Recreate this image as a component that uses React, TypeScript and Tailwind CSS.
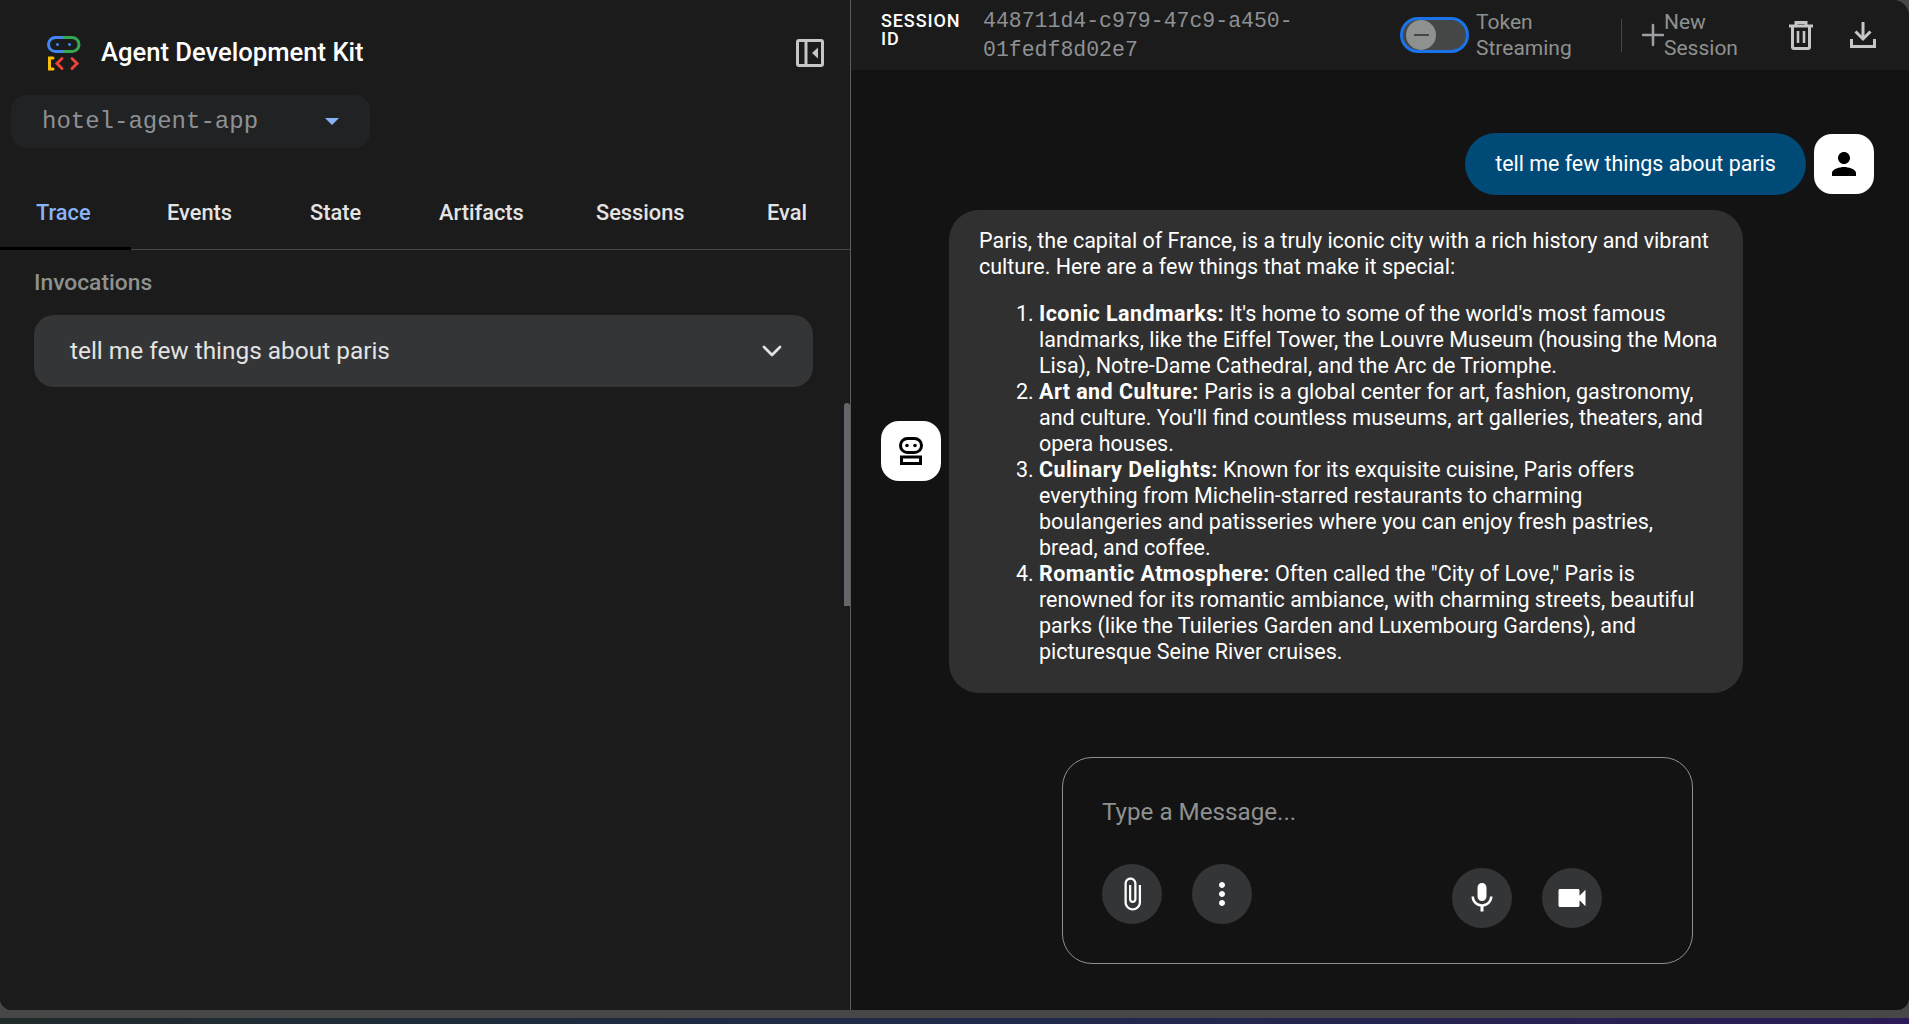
import { ChevronDown, Plus } from 'lucide-react'

const tabs = [
  { label: 'Trace', className: 'w-[131px] text-[#8ab4f8] pl-[36px] pb-[9px] border-b-[3px] border-black' },
  { label: 'Events', className: 'w-[179px] text-[#e3e3e3] pl-[36px] pb-[12px]' },
  { label: 'State', className: 'w-[129px] text-[#e3e3e3] pb-[12px]' },
  { label: 'Artifacts', className: 'w-[157px] text-[#e3e3e3] pb-[12px]' },
  { label: 'Sessions', className: 'w-[171px] text-[#e3e3e3] pb-[12px]' },
  { label: 'Eval', className: 'w-[50px] text-[#e3e3e3] pb-[12px]' },
]

function AdkLogo() {
  return (
    <svg width="36" height="36" viewBox="0 0 36 36" fill="none" strokeWidth="3" strokeLinecap="round">
      <path d="M18 2.5H9.5a7 7 0 0 0 0 14H18" stroke="#4285f4" />
      <path d="M18 2.5h8a7 7 0 0 1 0 14h-8" stroke="#34a853" />
      <circle cx="11.5" cy="9.5" r="1.5" fill="#4285f4" />
      <circle cx="23.5" cy="9.5" r="1.5" fill="#4285f4" />
      <path d="M7 23H3.5v11H7" stroke="#fbbc04" />
      <path d="M16 23.5l-5 5 5 5" stroke="#ea4335" />
      <path d="M26 23.5l5 5-5 5" stroke="#ea4335" />
    </svg>
  )
}

function BotIcon() {
  return (
    <svg width="24" height="28" viewBox="0 0 24 28" fill="none" stroke="#000" strokeWidth="3">
      <rect x="1.5" y="1.5" width="21" height="14" rx="7" />
      <circle cx="8" cy="8.5" r="1.8" fill="#000" stroke="none" />
      <circle cx="16" cy="8.5" r="1.8" fill="#000" stroke="none" />
      <rect x="2.5" y="20" width="19" height="6.5" />
    </svg>
  )
}

function UserIcon() {
  return (
    <svg width="36" height="36" viewBox="0 0 24 24" fill="#000">
      <path d="M12 12c2.21 0 4-1.79 4-4s-1.79-4-4-4-4 1.79-4 4 1.79 4 4 4zm0 2c-2.67 0-8 1.34-8 4v2h16v-2c0-2.66-5.33-4-8-4z" />
    </svg>
  )
}

function MaterialIcon({ d }: { d: string }) {
  return (
    <svg width="36" height="36" viewBox="0 0 24 24" fill="#fff">
      <path d={d} />
    </svg>
  )
}

function RoundButton({ children, className = '' }: { children: React.ReactNode; className?: string }) {
  return (
    <button className={`w-[60px] h-[60px] rounded-full bg-[#333537] flex items-center justify-center text-white ${className}`}>
      {children}
    </button>
  )
}

export default function App() {
  return (
    <div className="h-screen overflow-hidden flex flex-col bg-[#474747] font-['Roboto',sans-serif]">
      <div className="h-[1010px] flex rounded-b-[12px] rounded-tr-[16px] overflow-hidden bg-[#131314]">
        {/* side panel */}
        <aside className="w-[851px] shrink-0 bg-[#1b1b1b] border-r border-[#5a5c5e] relative">
          <div className="h-[95px] flex items-center pl-[46px] pr-[26px] pt-[10px]">
            <AdkLogo />
            <span className="ml-[19px] text-[25.6px] font-medium text-white">Agent Development Kit</span>
            <svg className="ml-auto" width="28" height="28" viewBox="0 0 28 28" fill="none" stroke="#c4c7c5" strokeWidth="3">
              <rect x="1.5" y="1.5" width="25" height="25" rx="1.5" />
              <path d="M10 2v24" />
              <path d="M22 8.5v11l-6-5.5z" fill="#c4c7c5" stroke="none" />
            </svg>
          </div>

          <div className="ml-[11px] w-[359px] h-[53px] rounded-[15px] bg-[#212224] flex items-center pl-[31px] pr-[31px]">
            <span className="font-['Liberation_Mono',monospace] text-[24px] text-[#8e9194]">hotel-agent-app</span>
            <span className="ml-auto w-0 h-0 border-x-[7px] border-x-transparent border-t-[7px] border-t-[#8ab4f8]" />
          </div>

          <div className="mt-[40px] h-[62px] flex border-b border-[#444746]">
            {tabs.map(tab => (
              <div key={tab.label} className={`h-[62px] flex items-center text-[21.8px] font-medium ${tab.className}`}>
                {tab.label}
              </div>
            ))}
          </div>

          <div className="pl-[34px] pr-[37px]">
            <div className="mt-[20px] text-[22.8px] leading-[26px] font-medium text-[#8e918f]">Invocations</div>
            <div className="mt-[19px] h-[72px] rounded-[20px] bg-[#333537] flex items-center pl-[36px] pr-[25px] text-[24.4px] text-[#e3e3e3]">
              tell me few things about paris
              <ChevronDown className="ml-auto w-[32px] h-[32px] text-[#e3e3e3]" strokeWidth={2} />
            </div>
          </div>

          <div className="absolute right-0 top-[403px] w-[6px] h-[203px] rounded-t-[3px] bg-[#63666a]" />
        </aside>

        {/* chat */}
        <main className="flex-1 flex flex-col min-w-0">
          <header className="h-[70px] shrink-0 bg-[#1b1b1b] flex items-center pl-[30px]">
            <div className="w-[102px] text-[18px] leading-[18px] tracking-[0.05em] font-medium text-white -mt-[10px]">
              SESSION
              <br />
              ID
            </div>
            <div className="w-[417px] pt-[2px] font-['Liberation_Mono',monospace] text-[21.5px] leading-[29px] text-[#8e9194]">
              448711d4-c979-47c9-a450-
              <br />
              01fedf8d02e7
            </div>
            <div className="w-[69px] h-[36px] rounded-full border-[3px] border-[#1a73e8] bg-[#444746] flex items-center pl-[3px]">
              <span className="w-[30px] h-[30px] rounded-full bg-[#8e918f] flex items-center justify-center">
                <span className="w-[15px] h-[2px] bg-[#444746]" />
              </span>
            </div>
            <div className="ml-[7px] w-[145px] text-[21px] leading-[26px] text-[#8e918f]">
              Token
              <br />
              Streaming
            </div>
            <div className="w-px h-[33px] bg-[#444746]" />
            <Plus className="ml-[14px] w-[34px] h-[34px] text-[#9aa0a6]" strokeWidth={1.8} />
            <div className="-ml-[6px] w-[125px] text-[21px] leading-[26px] text-[#8e918f]">
              New
              <br />
              Session
            </div>
            <svg width="24" height="29" viewBox="0 0 24 29" fill="none" stroke="#c4c7c5" strokeWidth="3">
              <path d="M0 5h24" />
              <path d="M7 5V1.5h10V5" />
              <path d="M3.5 5v21a1.5 1.5 0 0 0 1.5 1.5h14a1.5 1.5 0 0 0 1.5-1.5V5" />
              <path d="M9 10v12M15 10v12" strokeWidth="2.6" />
            </svg>
            <svg className="ml-[37px]" width="26" height="26" viewBox="0 0 26 26" fill="none" stroke="#c4c7c5" strokeWidth="3">
              <path d="M13 0v17" />
              <path d="M5.5 9.5L13 17l7.5-7.5" />
              <path d="M1.5 17v7.5h23V17" />
            </svg>
          </header>

          <div className="flex justify-end mt-[63px] pr-[35px]">
            <div className="h-[62px] w-[341px] pt-[1px] rounded-full bg-[#004a77] flex items-center justify-center text-[21.4px] text-white">
              tell me few things about paris
            </div>
            <div className="ml-[8px] mt-px w-[60px] h-[60px] rounded-[18px] bg-white flex items-center justify-center">
              <UserIcon />
            </div>
          </div>

          <div className="flex items-center mt-[15px] pl-[30px]">
            <div className="w-[60px] h-[60px] mb-[2px] rounded-[18px] bg-white flex items-center justify-center">
              <BotIcon />
            </div>
            <div className="ml-[8px] w-[794px] h-[483px] rounded-[30px] bg-[#303030] pl-[30px] pt-[18px] text-[21.5px] leading-[26px] text-white whitespace-nowrap">
              <p>
                Paris, the capital of France, is a truly iconic city with a rich history and vibrant
                <br />
                culture. Here are a few things that make it special:
              </p>
              <ol className="mt-[21px] pl-[60px] list-decimal">
                <li>
                  <b className="font-bold tracking-[0.02em]">Iconic Landmarks:</b> It's home to some of the world's most famous
                  <br />
                  landmarks, like the Eiffel Tower, the Louvre Museum (housing the Mona
                  <br />
                  Lisa), Notre-Dame Cathedral, and the Arc de Triomphe.
                </li>
                <li>
                  <b className="font-bold tracking-[0.02em]">Art and Culture:</b> Paris is a global center for art, fashion, gastronomy,
                  <br />
                  and culture. You'll find countless museums, art galleries, theaters, and
                  <br />
                  opera houses.
                </li>
                <li>
                  <b className="font-bold tracking-[0.02em]">Culinary Delights:</b> Known for its exquisite cuisine, Paris offers
                  <br />
                  everything from Michelin-starred restaurants to charming
                  <br />
                  boulangeries and patisseries where you can enjoy fresh pastries,
                  <br />
                  bread, and coffee.
                </li>
                <li>
                  <b className="font-bold tracking-[0.02em]">Romantic Atmosphere:</b> Often called the "City of Love," Paris is
                  <br />
                  renowned for its romantic ambiance, with charming streets, beautiful
                  <br />
                  parks (like the Tuileries Garden and Luxembourg Gardens), and
                  <br />
                  picturesque Seine River cruises.
                </li>
              </ol>
            </div>
          </div>

          <div className="ml-[211px] mt-[64px] w-[631px] h-[207px] rounded-[30px] border border-[#8e918f] pl-[39px]">
            <div className="pt-[40px] text-[24.2px] leading-[28px] text-[#8e918f]">Type a Message...</div>
            <div className="mt-[38px] flex items-start">
              <RoundButton>
                <MaterialIcon d="M16.5 6v11.5c0 2.21-1.79 4-4 4s-4-1.79-4-4V5c0-1.38 1.12-2.5 2.5-2.5s2.5 1.12 2.5 2.5v10.5c0 .55-.45 1-1 1s-1-.45-1-1V6H10v9.5c0 1.38 1.12 2.5 2.5 2.5s2.5-1.12 2.5-2.5V5c0-2.21-1.79-4-4-4S7 2.79 7 5v12.5c0 3.04 2.46 5.5 5.5 5.5s5.5-2.46 5.5-5.5V6h-1.5z" />
              </RoundButton>
              <RoundButton className="ml-[30px]">
                <MaterialIcon d="M12 8c1.1 0 2-.9 2-2s-.9-2-2-2-2 .9-2 2 .9 2 2 2zm0 2c-1.1 0-2 .9-2 2s.9 2 2 2 2-.9 2-2-.9-2-2-2zm0 6c-1.1 0-2 .9-2 2s.9 2 2 2 2-.9 2-2-.9-2-2-2z" />
              </RoundButton>
              <RoundButton className="ml-[200px] mt-[4px]">
                <MaterialIcon d="M12 14c1.66 0 2.99-1.34 2.99-3L15 5c0-1.66-1.34-3-3-3S9 3.34 9 5v6c0 1.66 1.34 3 3 3zm5.3-3c0 3-2.54 5.1-5.3 5.1S6.7 14 6.7 11H5c0 3.41 2.72 6.23 6 6.72V21h2v-3.28c3.28-.48 6-3.3 6-6.72h-1.7z" />
              </RoundButton>
              <RoundButton className="ml-[30px] mt-[4px]">
                <MaterialIcon d="M17 10.5V7c0-.55-.45-1-1-1H4c-.55 0-1 .45-1 1v10c0 .55.45 1 1 1h12c.55 0 1-.45 1-1v-3.5l4 4v-11l-4 4z" />
              </RoundButton>
            </div>
          </div>
        </main>
      </div>
      <div className="h-[8px] shrink-0 bg-[#474747]" />
      <div className="h-[6px] shrink-0 bg-gradient-to-r from-[#1f2a2a] via-[#1f2a4a] to-[#2a1a55]" />
    </div>
  )
}
